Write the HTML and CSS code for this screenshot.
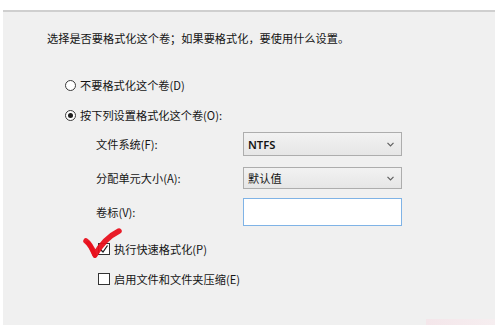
FILE: index.html
```html
<!DOCTYPE html>
<html lang="zh-CN">
<head>
<meta charset="utf-8">
<title>格式化分区</title>
<link rel="stylesheet" href="styles.css">
</head>
<body>
<div class="panel">
  <p class="intro">选择是否要格式化这个卷；如果要格式化，要使用什么设置。</p>

  <label class="radio-row first">
    <span class="radio"></span>
    <span>不要格式化这个卷(D)</span>
  </label>
  <label class="radio-row second">
    <span class="radio checked"></span>
    <span>按下列设置格式化这个卷(O):</span>
  </label>

  <div class="field fs">
    <span class="field-label">文件系统(F):</span>
    <div class="select"><span class="select-text bold">NTFS</span>
      <svg class="chev" width="7" height="5" viewBox="0 0 7 5"><path d="M0.5 0.8 L3.5 3.8 L6.5 0.8" fill="none" stroke="#606060" stroke-width="1.2"/></svg>
    </div>
  </div>
  <div class="field au">
    <span class="field-label">分配单元大小(A):</span>
    <div class="select short"><span class="select-text">默认值</span>
      <svg class="chev" width="7" height="5" viewBox="0 0 7 5"><path d="M0.5 0.8 L3.5 3.8 L6.5 0.8" fill="none" stroke="#606060" stroke-width="1.2"/></svg>
    </div>
  </div>
  <div class="field vl">
    <span class="field-label">卷标(V):</span>
    <div class="textbox"></div>
  </div>

  <label class="check-row c1">
    <span class="box checked"><svg width="10" height="10" viewBox="0 0 10 10"><path d="M1.5 5.5 L4 8 L8.5 1.5" fill="none" stroke="#222" stroke-width="1.3"/></svg></span>
    <span>执行快速格式化(P)</span>
  </label>
  <label class="check-row c2">
    <span class="box"></span>
    <span>启用文件和文件夹压缩(E)</span>
  </label>

  <svg class="redmark" width="44" height="36" viewBox="0 0 44 36">
    <path d="M4 13 C7 15 10 20 13 27 C18 18 25 9 37 3" fill="none" stroke="#e8101c" stroke-width="5.5" stroke-linecap="round" stroke-linejoin="round" opacity="0.95"/>
    <path d="M6 15 C9 18 11 23 13 28" fill="none" stroke="#e8101c" stroke-width="4" stroke-linecap="round"/>
  </svg>
</div>
</body>
</html>
```

FILE: styles.css
```css
* { box-sizing: border-box; }
html, body { margin: 0; padding: 0; background: #ffffff; }
body {
  font-family: "Noto Sans CJK SC", "Noto Sans", sans-serif;
  font-size: 11.2px;
  color: #141414;
}
.panel {
  position: relative;
  margin: 10px 6px 0 3px;
  height: 315px;
  background: #f0f0f0 linear-gradient(90deg, #f4e6ea, #f6eef0) no-repeat right bottom / 69px 6px;
  border-top: 2px solid #cfcfcf;
  display: flex;
  flex-direction: column;
  padding-top: 18px;
}
.intro {
  margin: 0 0 0 44px;
  height: 16px;
  line-height: 16px;
}
.radio-row, .check-row {
  display: flex;
  align-items: center;
  height: 16px;
  line-height: 16px;
}
.radio-row { margin-left: 62px; gap: 4px; }
.radio-row.first { margin-top: 31px; }
.radio-row.second { margin-top: 14px; }
.radio {
  width: 11px; height: 11px;
  border: 1px solid #3a3a3a;
  border-radius: 50%;
  background: #fff;
  display: flex; align-items: center; justify-content: center;
}
.radio.checked::after {
  content: "";
  width: 5px; height: 5px;
  border-radius: 50%;
  background: #1e1e1e;
}
.field {
  display: flex;
  align-items: center;
  margin-left: 93px;
}
.field-label { width: 147px; }
.field.fs { margin-top: 9px; height: 24px; }
.field.au { margin-top: 11px; height: 22px; }
.field.vl { margin-top: 9px; height: 28px; }
.select {
  width: 159px;
  height: 24px;
  border: 1px solid #adadad;
  background: linear-gradient(#f2f2f2, #e6e6e6);
  display: flex;
  align-items: center;
  justify-content: space-between;
  padding: 0 7px 0 4px;
}
.select.short { height: 22px; }
.select-text.bold { font-weight: 600; font-family: "Noto Sans", "Noto Sans CJK SC", sans-serif; }
.chev { display: block; }
.textbox {
  width: 159px;
  height: 28px;
  border: 1px solid #7fb3e6;
  background: #fff;
}
.check-row { margin-left: 95px; gap: 4px; }
.check-row.c1 { margin-top: 15px; }
.check-row.c2 { margin-top: 14px; }
.box {
  width: 12px; height: 12px;
  border: 1px solid #333;
  background: #fff;
  display: flex; align-items: center; justify-content: center;
}
.box svg { display: block; }
.redmark {
  position: absolute;
  left: 79px;
  top: 216px;
}
```
